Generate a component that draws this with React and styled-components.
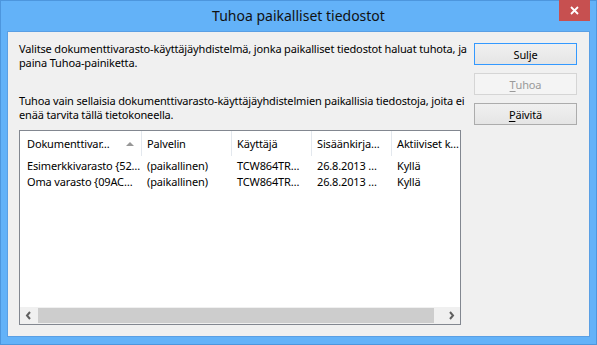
import React from "react";
import styled, { createGlobalStyle, css } from "styled-components";

const GlobalStyle = createGlobalStyle`
  html, body { margin: 0; padding: 0; background: #ffffff; }
  body { font-family: "Noto Sans", "DejaVu Sans", sans-serif; color: #000; }
  * { box-sizing: border-box; }
`;

const uiText = css`
  font-size: 11px;
  letter-spacing: -0.15px;
`;

const Window = styled.div`
  width: 597px;
  height: 345px;
  background: #63b2f8;
  border: 1px solid #4d96dd;
  display: flex;
  flex-direction: column;
`;

const TitleBar = styled.div`
  height: 30px;
  flex: none;
  display: grid;
  grid-template-columns: 1fr auto 1fr;
  padding: 0 6px;
`;

const Title = styled.div`
  grid-column: 2;
  font-size: 14px;
  line-height: 30px;
  color: #111;
  white-space: nowrap;
`;

const CloseButton = styled.div`
  grid-column: 3;
  justify-self: end;
  align-self: start;
  margin-top: -1px;
  width: 31px;
  height: 21px;
  background: #c75050;
  display: flex;
  align-items: center;
  justify-content: center;
`;

const Client = styled.div`
  flex: 1;
  margin: 0 6px 7px;
  background: #f0f0f0;
  border: 1px solid #5a9fe4;
  display: flex;
  gap: 13px;
  padding: 10px 0 0 11px;
`;

const LeftColumn = styled.div`
  width: 442px;
  display: flex;
  flex-direction: column;
`;

const Paragraph = styled.p`
  ${uiText};
  margin: 0 0 ${(p) => p.$after}px;
  line-height: 14px;
  white-space: nowrap;
`;

const ListBox = styled.div`
  height: 195px;
  border: 1px solid #828790;
  background: #ffffff;
  display: flex;
  flex-direction: column;
`;

const Viewport = styled.div`
  flex: 1;
  overflow: hidden;
`;

const Table = styled.div`
  width: 452px;
`;

const HeaderRow = styled.div`
  display: flex;
  height: 25px;
  margin-bottom: 2px;
`;

const HeaderCell = styled.div`
  ${uiText};
  width: ${(p) => p.$w}px;
  flex: none;
  display: flex;
  align-items: center;
  padding: 0 7px 0 ${(p) => p.$pl}px;
  border-right: 1px solid #e3e8ee;
  white-space: nowrap;
  overflow: hidden;
`;

const SortArrow = styled.svg`
  margin-left: auto;
  flex: none;
`;

const Row = styled.div`
  display: flex;
  height: 16px;
`;

const Cell = styled.div`
  ${uiText};
  width: ${(p) => p.$w}px;
  flex: none;
  padding-left: ${(p) => p.$pl}px;
  line-height: 16px;
  white-space: nowrap;
  overflow: hidden;
`;

const HScrollBar = styled.div`
  height: 17px;
  flex: none;
  background: #f0f0f0;
  display: flex;
  align-items: center;
`;

const ArrowButton = styled.div`
  width: 17px;
  height: 17px;
  flex: none;
  display: flex;
  align-items: center;
  justify-content: center;
`;

const Track = styled.div`
  flex: 1;
  height: 17px;
  display: flex;
  align-items: center;
  padding-left: 1px;
`;

const Thumb = styled.div`
  width: ${(p) => p.$w}px;
  height: 15px;
  background: #cdcdcd;
`;

const ButtonColumn = styled.div`
  width: 103px;
  padding-top: 1px;
  display: flex;
  flex-direction: column;
  gap: 8px;
`;

const Button = styled.div`
  ${uiText};
  height: 22px;
  display: flex;
  align-items: center;
  justify-content: center;
  border: 1px solid
    ${(p) => (p.$default ? "#3399ff" : p.$disabled ? "#d5d5d5" : "#acacac")};
  background: ${(p) =>
    p.$disabled ? "#f4f4f4" : "linear-gradient(#f0f0f0, #e5e5e5)"};
  color: ${(p) => (p.$disabled ? "#9a9a9a" : "#000")};
`;

const AccessKey = styled.span`
  text-decoration: underline;
  text-underline-offset: 2px;
`;

const columns = [
  { w: 122, pl: 7, title: "Dokumenttivar…", sorted: true },
  { w: 90, pl: 5, title: "Palvelin" },
  { w: 80, pl: 5, title: "Käyttäjä" },
  { w: 80, pl: 5, title: "Sisäänkirja…" },
  { w: 80, pl: 5, title: "Aktiiviset k…" },
];

const rows = [
  ["Esimerkkivarasto {52…", "(paikallinen)", "TCW864TR…", "26.8.2013 …", "Kyllä"],
  ["Oma varasto {09AC…", "(paikallinen)", "TCW864TR…", "26.8.2013 …", "Kyllä"],
];

const Chevron = ({ dir }) => (
  <svg width="7" height="9" viewBox="0 0 7 9">
    <polyline
      points={dir === "left" ? "5,1 2,4.5 5,8" : "2,1 5,4.5 2,8"}
      fill="none"
      stroke="#606060"
      strokeWidth="2"
    />
  </svg>
);

export default function App() {
  return (
    <>
      <GlobalStyle />
      <Window>
        <TitleBar>
          <Title>Tuhoa paikalliset tiedostot</Title>
          <CloseButton>
            <svg width="9" height="9" viewBox="0 0 9 9">
              <path d="M1 1 L8 8 M8 1 L1 8" stroke="#fff" strokeWidth="1.8" />
            </svg>
          </CloseButton>
        </TitleBar>
        <Client>
          <LeftColumn>
            <Paragraph $after={24}>
              Valitse dokumenttivarasto-käyttäjäyhdistelmä, jonka paikalliset tiedostot haluat tuhota, ja
              <br />
              paina Tuhoa-painiketta.
            </Paragraph>
            <Paragraph $after={8}>
              Tuhoa vain sellaisia dokumenttivarasto-käyttäjäyhdistelmien paikallisia tiedostoja, joita ei
              <br />
              enää tarvita tällä tietokoneella.
            </Paragraph>
            <ListBox>
              <Viewport>
                <Table>
                  <HeaderRow>
                    {columns.map((c) => (
                      <HeaderCell key={c.title} $w={c.w} $pl={c.pl}>
                        {c.title}
                        {c.sorted && (
                          <SortArrow width="8" height="4" viewBox="0 0 8 4">
                            <polygon points="0,4 4,0 8,4" fill="#979797" />
                          </SortArrow>
                        )}
                      </HeaderCell>
                    ))}
                  </HeaderRow>
                  {rows.map((r, i) => (
                    <Row key={i}>
                      {r.map((v, j) => (
                        <Cell key={j} $w={columns[j].w} $pl={columns[j].pl}>
                          {v}
                        </Cell>
                      ))}
                    </Row>
                  ))}
                </Table>
              </Viewport>
              <HScrollBar>
                <ArrowButton>
                  <Chevron dir="left" />
                </ArrowButton>
                <Track>
                  <Thumb $w={396} />
                </Track>
                <ArrowButton>
                  <Chevron dir="right" />
                </ArrowButton>
              </HScrollBar>
            </ListBox>
          </LeftColumn>
          <ButtonColumn>
            <Button $default>Sulje</Button>
            <Button $disabled>
              <AccessKey>T</AccessKey>uhoa
            </Button>
            <Button>
              <AccessKey>P</AccessKey>äivitä
            </Button>
          </ButtonColumn>
        </Client>
      </Window>
    </>
  );
}
